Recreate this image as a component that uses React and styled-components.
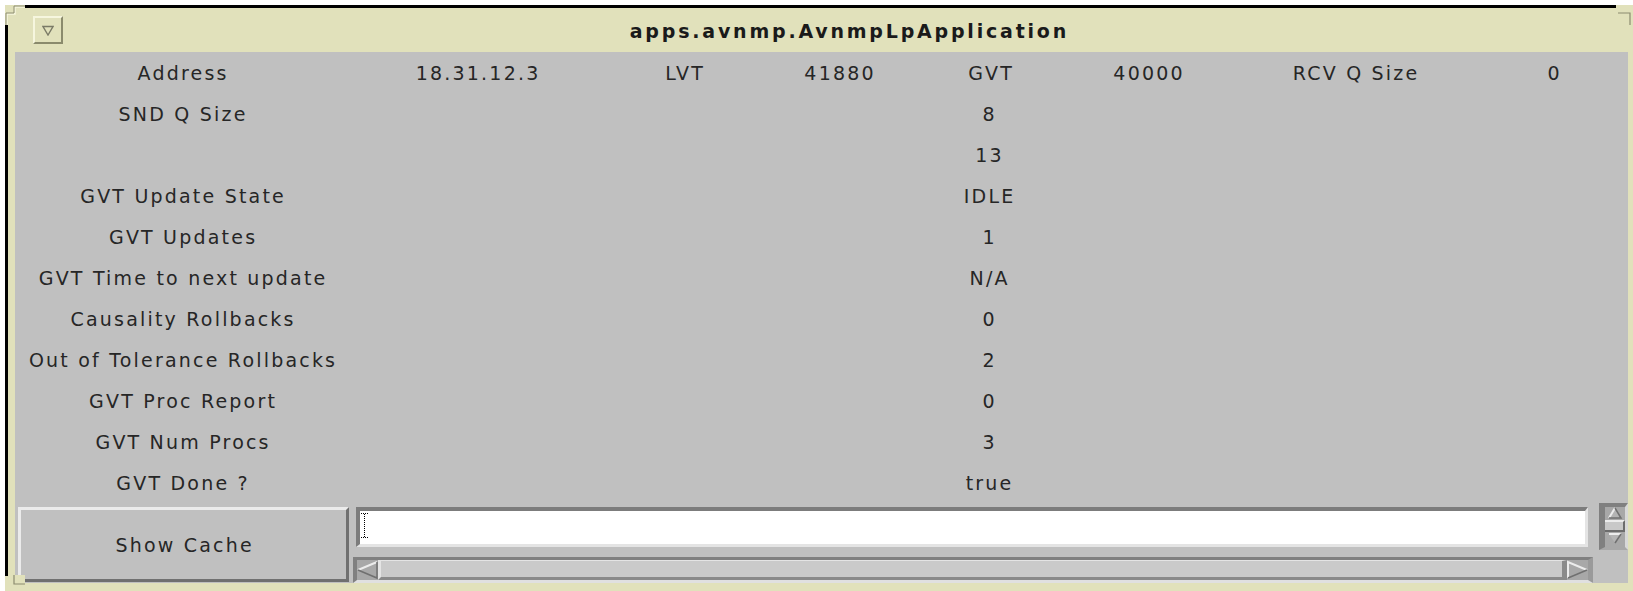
import React from 'react'
import styled, { createGlobalStyle } from 'styled-components'

const GlobalStyle = createGlobalStyle`
  html, body {
    margin: 0;
    padding: 0;
    background: #ffffff;
    overflow: hidden;
  }
`

const beige = '#e1e1bb'
const panel = '#c0c0c0'
const ink = '#262626'

const Screen = styled.div`
  position: relative;
  width: 1633px;
  height: 591px;
  overflow: hidden;
  font-family: "DejaVu Sans", "Liberation Sans", sans-serif;
`

const Frame = styled.div`
  margin: 5px 0 0 5px;
  border-top: 3px solid #000;
  border-left: 3px solid #000;
  background: ${beige};
  padding: 0 5px 8px 7px;
  box-sizing: content-box;
  width: 1613px;
`

const TitleBar = styled.div`
  display: flex;
  align-items: center;
  height: 44px;
  margin-left: -7px;
  margin-right: -5px;
`

const MenuButton = styled.div`
  width: 26px;
  height: 24px;
  margin-left: 25px;
  border: 2px solid;
  border-color: #f6f6de #8a8a6c #8a8a6c #f6f6de;
  display: flex;
  align-items: center;
  justify-content: center;
`

const Title = styled.div`
  flex: 1;
  text-align: center;
  font-weight: bold;
  font-size: 19px;
  letter-spacing: 2.8px;
  padding-left: 2.8px;
  color: #1a1a1a;
  padding-top: 1px;
`

const Content = styled.div`
  background: ${panel};
  width: 1613px;
  height: 531px;
  display: flex;
  flex-direction: column;
`

const Table = styled.div`
  display: grid;
  grid-template-columns: 334px 256px 158px 152px 150px 166px 248px 149px;
  grid-auto-rows: 41px;
`

const Cell = styled.div`
  grid-column: ${p => (p.$span ? '2 / -1' : 'auto')};
  display: flex;
  align-items: center;
  justify-content: center;
  font-size: 19px;
  letter-spacing: 2.2px;
  padding-left: 2.2px;
  color: ${ink};
  white-space: nowrap;
`

const Bottom = styled.div`
  display: flex;
  height: 80px;
`

const CacheButton = styled.div`
  width: 324px;
  height: 69px;
  margin: 4px 0 0 3px;
  border: 3px solid;
  border-color: #ebebeb #707070 #707070 #ebebeb;
  display: flex;
  align-items: center;
  justify-content: center;
  font-size: 19px;
  letter-spacing: 2.2px;
  padding-left: 2.2px;
  color: ${ink};
  box-sizing: content-box;
`

const TextGroup = styled.div`
  margin-left: 4px;
  display: grid;
  grid-template-columns: 1240px 29px;
  grid-template-rows: 47px 26px;
  column-gap: 6px;
  row-gap: 7px;
`

const TextField = styled.div`
  margin: 4px 5px 0 3px;
  height: 31px;
  background: #ffffff;
  border-top: 4px solid #7c7c7c;
  border-left: 4px solid #7c7c7c;
  border-right: 3px solid #e4e4e4;
  border-bottom: 3px solid #e4e4e4;
  display: flex;
  align-items: flex-start;
  padding: 2px 0 0 1px;
`

const VScroll = styled.div`
  display: flex;
  flex-direction: column;
  border-top: 4px solid #808080;
  border-left: 6px solid #808080;
  border-right: 3px solid #d8d8d8;
  border-bottom: 3px solid #a8a8a8;
  background: #a8a8a8;
`

const VThumb = styled.div`
  height: 8px;
  margin: 1px 0;
  background: #c8c8c8;
  border-top: 2px solid #ececec;
  border-bottom: 2px solid #6c6c6c;
  border-right: 2px solid #6c6c6c;
`

const HScroll = styled.div`
  display: flex;
  border-top: 3px solid #808080;
  border-left: 4px solid #808080;
  border-right: 5px solid #9a9a9a;
  border-bottom: 3px solid #e0e0e0;
  background: #a8a8a8;
`

const HThumb = styled.div`
  flex: 1;
  background: #cacaca;
  border-left: 3px solid #e4e4e4;
  border-top: 1px solid #e4e4e4;
  border-right: 5px solid #8a8a8a;
  border-bottom: 3px solid #8a8a8a;
`

const Arrow = styled.svg`
  display: block;
  flex: none;
`

const Corner = styled.svg`
  position: absolute;
  display: block;
`

const header = ['Address', '18.31.12.3', 'LVT', '41880', 'GVT', '40000', 'RCV Q Size', '0']

const stats = [
  ['SND Q Size', '8'],
  ['', '13'],
  ['GVT Update State', 'IDLE'],
  ['GVT Updates', '1'],
  ['GVT Time to next update', 'N/A'],
  ['Causality Rollbacks', '0'],
  ['Out of Tolerance Rollbacks', '2'],
  ['GVT Proc Report', '0'],
  ['GVT Num Procs', '3'],
  ['GVT Done ?', 'true'],
]

function Caret() {
  return (
    <svg width="7" height="25" viewBox="0 0 7 25">
      <path d="M0 0.5h7M0 24.5h7" stroke="#000" strokeDasharray="1 1" />
      <path d="M3.5 1v23" stroke="#000" strokeDasharray="1 1" />
    </svg>
  )
}

export default function App() {
  return (
    <Screen>
      <GlobalStyle />
      <Frame>
        <TitleBar>
          <MenuButton>
            <svg width="12" height="11" viewBox="0 0 12 11">
              <path d="M1 1.5h10L6 10z" fill="none" stroke="#7a7a66" strokeWidth="1.4" />
            </svg>
          </MenuButton>
          <Title>apps.avnmp.AvnmpLpApplication</Title>
        </TitleBar>
        <Content>
          <Table>
            {header.map((h, i) => (
              <Cell key={i}>{h}</Cell>
            ))}
            {stats.map(([label, value], i) => (
              <React.Fragment key={i}>
                <Cell>{label}</Cell>
                <Cell $span>{value}</Cell>
              </React.Fragment>
            ))}
          </Table>
          <Bottom>
            <CacheButton>Show Cache</CacheButton>
            <TextGroup>
              <TextField>
                <Caret />
              </TextField>
              <VScroll>
                <Arrow width="20" height="12" viewBox="0 0 20 12">
                  <path d="M10 1L16 11H4z" fill="#b4b4b4" />
                  <path d="M4 11L10 1" stroke="#ececec" strokeWidth="2" />
                  <path d="M10 1L16 11H4" fill="none" stroke="#707070" strokeWidth="1.5" />
                </Arrow>
                <VThumb />
                <Arrow width="20" height="11" viewBox="0 0 20 11">
                  <path d="M4 1H16L10 10z" fill="#b4b4b4" />
                  <path d="M4 1H16" stroke="#ececec" strokeWidth="2" />
                  <path d="M16 1L10 10" stroke="#707070" strokeWidth="1.5" />
                </Arrow>
              </VScroll>
              <HScroll>
                <Arrow width="21" height="20" viewBox="0 0 21 20">
                  <path d="M1 10L20 2V18z" fill="#a8a8a8" />
                  <path d="M1 10L20 2" stroke="#ececec" strokeWidth="2" />
                  <path d="M1 10L20 18V2" fill="none" stroke="#707070" strokeWidth="1.5" />
                </Arrow>
                <HThumb />
                <Arrow width="21" height="20" viewBox="0 0 21 20">
                  <path d="M20 10L1 2V18z" fill="#a8a8a8" />
                  <path d="M1 18V2L20 10" fill="none" stroke="#ececec" strokeWidth="2" />
                  <path d="M1 18L20 10" stroke="#707070" strokeWidth="1.5" />
                </Arrow>
              </HScroll>
            </TextGroup>
          </Bottom>
        </Content>
      </Frame>

      {/* resize handles on the window frame */}
      <Corner width="20" height="20" viewBox="0 0 20 20" style={{ left: 5, top: 5 }}>
        <path d="M0 0H20V20H0z" fill={beige} />
        <path d="M2 20V9H10V2H20" fill="none" stroke="#f6f6de" strokeWidth="1.5" />
        <path d="M1 20V8H9V1H20" fill="none" stroke="#8c8c70" strokeWidth="1" />
      </Corner>
      <Corner width="17" height="20" viewBox="0 0 17 20" style={{ left: 1616, top: 5 }}>
        <path d="M0 0H17V20H0z" fill={beige} />
        <path d="M2 8H14V20" fill="none" stroke="#8c8c70" strokeWidth="1.2" />
      </Corner>
      <Corner width="20" height="16" viewBox="0 0 20 16" style={{ left: 5, top: 575 }}>
        <path d="M0 0H20V16H0z" fill={beige} />
        <path d="M0 0H3V1H0z" fill="#000" />
        <path d="M9 0V9H20" fill="none" stroke="#8c8c70" strokeWidth="1.2" />
      </Corner>
    </Screen>
  )
}
